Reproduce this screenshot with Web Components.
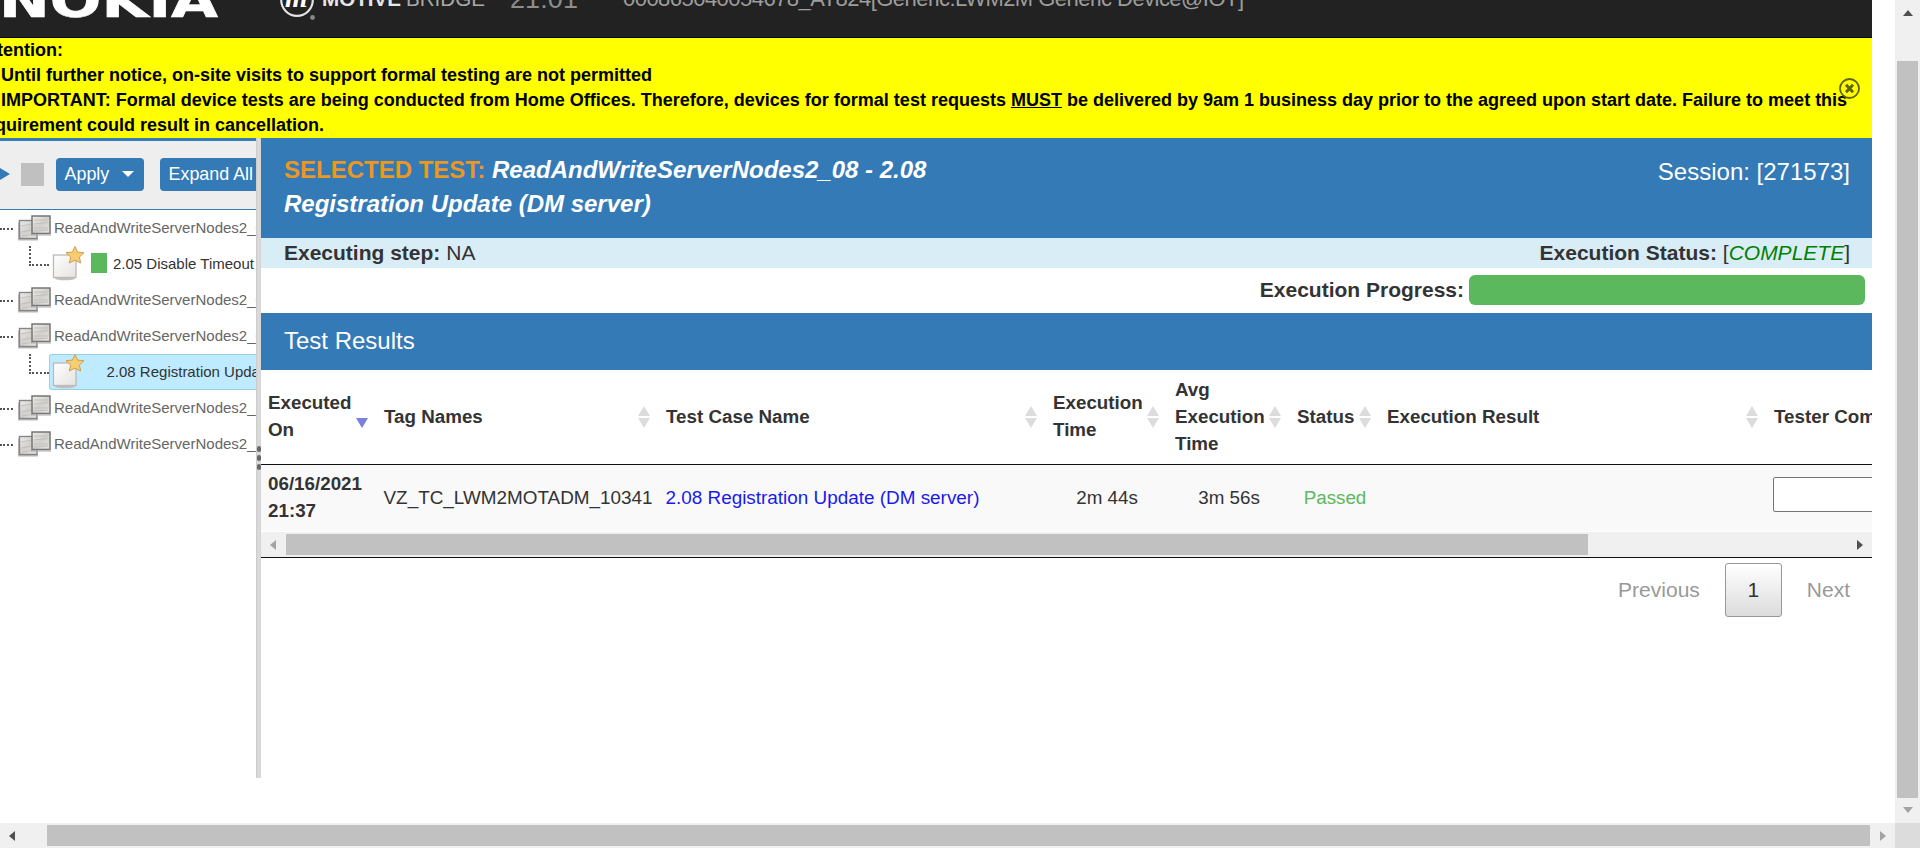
<!DOCTYPE html>
<html lang="en"><head><meta charset="utf-8"><title>Motive Bridge</title>
<style>html,body{margin:0;height:848px;overflow:hidden;background:#fff;font-family:"Liberation Sans",Arial,sans-serif;color:#333}</style></head>
<body><bridge-app></bridge-app>
<script>
function define(name, html){
  const t=document.createElement('template'); t.innerHTML=html;
  customElements.define(name, class extends HTMLElement{
    constructor(){super();this.attachShadow({mode:'open'}).append(t.content.cloneNode(true));}
  });
}

define('nav-header', `<style>
:host{display:block;height:37px;background:#222;border-bottom:1px solid #080808;overflow:hidden}
svg{display:block}
text{font-family:"Liberation Sans",Arial,sans-serif}
</style>
<svg width="1872" height="37">
<text x="-1" y="16.5" textLength="219" lengthAdjust="spacingAndGlyphs" fill="#fff" stroke="#fff" stroke-width=".6" style="font:bold 47px 'DejaVu Sans'">NOKIA</text>
<circle cx="297" cy="0" r="15.8" fill="none" stroke="#e4e4e4" stroke-width="2.2"/>
<text x="285" y="6.5" fill="#fff" style="font:italic bold 29px 'Liberation Serif'">m</text>
<circle cx="312.5" cy="17.5" r="2.4" fill="#888"/>
<text x="322" y="6" textLength="79" lengthAdjust="spacingAndGlyphs" fill="#e6e6e6" font-size="20" font-weight="bold">MOTIVE</text>
<text x="406" y="6" textLength="79" lengthAdjust="spacingAndGlyphs" fill="#aaa" font-size="20">BRIDGE</text>
<text x="510" y="8" textLength="68" fill="#8d8d8d" font-size="27">21:01</text>
<text x="623" y="6" textLength="621" fill="#9d9d9d" font-size="22">000865040054678_AT824[Generic:LWM2M Generic Device@IOT]</text>
</svg>`);

define('notice-banner', `<style>
:host{display:block;position:relative;height:100px;background:#ff0;overflow:hidden;color:#000;font-weight:bold;font-size:18px;line-height:25px;white-space:nowrap}
div{margin-left:-22px}
.in{padding-left:23px}
svg{position:absolute;left:1839px;top:40px}
</style>
<div>Attention:</div><div class="in">Until further notice, on-site visits to support formal testing are not permitted</div>
<div class="in">IMPORTANT: Formal device tests are being conducted from Home Offices. Therefore, devices for formal test requests <u>MUST</u> be delivered by 9am 1 business day prior to the agreed upon start date. Failure to meet this</div>
<div>requirement could result in cancellation.</div>
<svg width="21" height="21" fill="none" stroke="#626200"><circle cx="10.5" cy="10.5" r="9.5" stroke-width="1.8"/><path d="M7 6.8l7 7.4M14 6.8l-7 7.4" stroke-width="3"/></svg>`);

define('tool-bar', `<style>
:host{display:flex;align-items:center;box-sizing:border-box;height:72px;border-top:3px solid #337ab7;border-bottom:1px solid #337ab7;background:#eee;overflow:hidden;flex:none;padding-bottom:2px}
.play{flex:none;width:0;height:0;border:6px solid transparent;border-left:10px solid #337ab7;border-right:0;margin-right:11px}
.stop{flex:none;width:23px;height:23px;background:#c0c0c0;margin-right:12px}
button{flex:none;box-sizing:border-box;height:33px;border:0;border-radius:4px;background:#337ab7;color:#fff;font:17.9px/33px "Liberation Sans",Arial,sans-serif;padding:0 9px 0 8.5px;margin:0 16px 0 0;display:flex;align-items:center;white-space:nowrap}
button.a{width:88px}
i{border:6px solid transparent;border-top-color:#fff;border-bottom:0;margin-left:13px}
</style><span class="play"></span><span class="stop"></span><button class="a">Apply<i></i></button><button>Expand All</button>`);

define('folder-icon', `<style>:host{display:block;flex:none;width:36px;height:30px}svg{display:block}</style>
<svg width="36" height="30"><defs><linearGradient id="g" x2="1" y2="1"><stop stop-color="#efedeb"/><stop offset=".5" stop-color="#d2d0cd"/><stop offset="1" stop-color="#e6e4e1"/></linearGradient></defs>
<path d="M2 10.500v17h19" fill="none" stroke="#bbb" stroke-width="2"/>
<rect x="2.500" y="8.500" width="17.500" height="18" fill="url(#g)" stroke="#858585" stroke-width="1.4"/>
<path d="M4 14l11-2M4 20l12-2M5 24l12-2" stroke="#c2bfbc"/>
<rect x="15" y="4" width="18" height="17.500" fill="url(#g)" stroke="#767676" stroke-width="1.5"/>
<path d="M17 8h14M17 12l14-1.500M17 16h14M17 19l14-1" stroke="#c2bfbc"/><path d="M14 23h20" stroke="#aaa"/></svg>`);

define('page-icon', `<style>:host{display:block;flex:none;width:36px;height:36px}svg{display:block}</style>
<svg width="36" height="36"><defs><linearGradient id="p" x2="1" y2="1"><stop stop-color="#fff"/><stop offset="1" stop-color="#e5e3e1"/></linearGradient></defs>
<ellipse cx="15" cy="32.500" rx="10" ry="1.800" fill="#c0c0c0"/><rect x="3.500" y="9" width="22.500" height="22.500" fill="url(#p)" stroke="#bdb9b6" stroke-width="1.3"/>
<path d="M25 .5l2.600 5.600 6.400 .6-4.600 4.300 1.300 6-5.700-2.800-5.700 2.800 1.400-6-4.700-4.300 6.400-.6z" fill="#f8cd72" stroke="#cda14e"/></svg>`);

define('tree-group', `<style>
:host{display:flex;align-items:center;box-sizing:border-box;padding-bottom:2px;height:36px;flex:none;font-size:15px;color:#666;white-space:nowrap}
i{width:13px;border-top:2px dotted #555;flex:none;margin:3px 4px 0 0;height:0}
folder-icon{margin:-1px 1px 0 0}
</style><i></i><folder-icon></folder-icon><slot></slot>`);

define('tree-leaf', `<style>
:host{display:flex;height:36px;flex:none;font-size:15px;line-height:36px;color:#333;white-space:nowrap}
.l{box-sizing:border-box;width:20px;height:20px;margin-left:29px;border-left:2px dotted #555;border-bottom:2px dotted #555;flex:none}
.row{display:flex;align-items:center;box-sizing:border-box;height:36px;flex:1;border:1px solid transparent;border-right:0;min-width:0}
:host([selected]) .row{background:#beebff;border-color:#99cfe6;border-radius:3px 0 0 3px}
b{width:16px;height:20px;background:#5cb85c;margin:-2px 6px 0 5px;flex:none}
:host([selected]) b{visibility:hidden;width:9.500px}
</style><span class="l"></span><span class="row"><page-icon></page-icon><b></b><slot></slot></span>`);

define('side-panel', `<style>
:host{display:flex;flex-direction:column;width:256px;height:640px;overflow:hidden;flex:none}
span{color:#f0a33c}
</style><tool-bar></tool-bar>
<tree-group>ReadAndWriteServerNodes2_<span>05</span></tree-group><tree-leaf>2.05 Disable Timeout</tree-leaf>
<tree-group>ReadAndWriteServerNodes2_<span>06</span></tree-group><tree-group>ReadAndWriteServerNodes2_<span>08</span></tree-group>
<tree-leaf selected>2.08 Registration Update (DM server)</tree-leaf>
<tree-group>ReadAndWriteServerNodes2_</tree-group><tree-group>ReadAndWriteServerNodes2_</tree-group>`);

define('split-bar', `<style>
:host{display:flex;flex-direction:column;align-items:center;justify-content:center;gap:3px;width:5px;height:640px;background:linear-gradient(90deg,#cbcbcb,#dcdcdc 50%,#d4d4d4);flex:none}
i{width:4px;height:6px;border-radius:2px;background:#686868}
</style><i></i><i></i><i></i>`);

define('test-header', `<style>
:host{display:flex;justify-content:space-between;box-sizing:border-box;height:100px;background:#337ab7;color:#fff;padding:15px 22px 0 23px;font-size:24px;line-height:34px}
.t{width:660px;font-weight:bold}
.t span{color:#ec971f}
.s{padding-top:2px}
</style><div class="t"><span>SELECTED TEST:</span> <i>ReadAndWriteServerNodes2_08 - 2.08<br>Registration Update (DM server)</i></div><div class="s">Session: [271573]</div>`);

define('status-rows', `<style>
:host{display:block;font-size:21px}
.a{display:flex;justify-content:space-between;height:30px;line-height:30px;background:#d9edf7;padding:0 22px 0 23px}
.b{display:flex;justify-content:flex-end;align-items:center;height:45px;box-sizing:border-box;padding:0 7px 1px 0;gap:5px;font-weight:bold}
.p{width:396px;height:30px;border-radius:6px;background:#5cb85c}
em{color:#008000}
</style><div class="a"><span><b>Executing step:</b> NA</span><span><b>Execution Status:</b> [<em>COMPLETE</em>]</span></div>
<div class="b">Execution Progress:<span class="p"></span></div>`);

define('section-title', `<style>:host{display:block;box-sizing:border-box;height:57px;background:#337ab7;color:#fff;padding-left:23px;font-size:24px;line-height:55px}</style><slot></slot>`);

define('sort-icon', `<style>
:host{display:flex;flex-direction:column;gap:2px;flex:none;width:12px}
i{border:6px solid transparent}
.u{border-bottom:10px solid #dcdcdc;border-top:0}
.d{border-top:10px solid #dcdcdc;border-bottom:0}
:host([desc]) .u{visibility:hidden}
:host([desc]) .d{border-top-color:#7a80dd}
</style><i class="u"></i><i class="d"></i>`);

define('h-scroll', `<style>
:host{display:flex;align-items:center;height:25px;background:#f0f0f0;--thumb:#c1c1c1}
i{border:5.5px solid transparent;flex:none}
.l{border-right:6px solid var(--lc,#a3a3a3);border-left:0;margin-left:9px;margin-right:var(--ls,10px)}
.t{background:var(--thumb);height:21px;width:var(--tw)}
.r{border-left:6px solid var(--rc,#505050);border-right:0;margin-left:auto;margin-right:9px}
</style><i class="l"></i><span class="t"></span><i class="r"></i>`);

define('v-scroll', `<style>
:host{display:flex;flex-direction:column;align-items:center;width:25px;height:823px;background:#f0f0f0;flex:none}
i{border:5.5px solid transparent;flex:none}
.u{border-bottom:6px solid #505050;border-top:0;margin:10px 0 45px}
.t{background:#c1c1c1;width:21px;height:737px;flex:none}
.d{border-top:6px solid #a3a3a3;border-bottom:0;margin-top:9px}
</style><i class="u"></i><span class="t"></span><i class="d"></i>`);

define('head-cell', `<style>
:host{display:flex;box-sizing:border-box;height:94px;justify-content:space-between;align-items:center;padding:0 9px 0 7px}
span{margin-top:-2px}
</style><span><slot></slot></span><slot name="sort"></slot>`);

define('results-table', `<style>
:host{display:block;font-size:18.8px;line-height:27px;overflow:hidden}
.g{display:grid;grid-template-columns:116px 282px 387px 122px 122px 90px 387px 200px;align-items:center;white-space:nowrap}
.h{height:94px;font-weight:bold;border-bottom:1px solid #111}
.r{height:66px;background:#f9f9f9;border-bottom:1px solid #fff}
.r>*{padding:0 0 2px 7px}
.r .tag{padding-left:6.500px;font-size:18.900px}
.r .c{padding:0 0 2px;text-align:center}
.r a{color:#1a1aee;font-size:18.900px;padding-left:6.500px}
.r .ok{color:#5cb85c;text-align:center;padding:0 0 2px}
.r input{box-sizing:border-box;width:220px;height:35px;border:1px solid #767676;border-radius:2px;padding:0;margin:-7px 0 0 6px;background:#fff}
h-scroll{--tw:1302px;border-bottom:1px solid #111}
</style>
<div class="g h"><head-cell>Executed<br>On<sort-icon slot="sort" desc></sort-icon></head-cell><head-cell>Tag Names<sort-icon slot="sort"></sort-icon></head-cell><head-cell>Test Case Name<sort-icon slot="sort"></sort-icon></head-cell><head-cell>Execution<br>Time<sort-icon slot="sort"></sort-icon></head-cell><head-cell>Avg<br>Execution<br>Time<sort-icon slot="sort"></sort-icon></head-cell><head-cell>Status<sort-icon slot="sort"></sort-icon></head-cell><head-cell>Execution Result<sort-icon slot="sort"></sort-icon></head-cell><head-cell>Tester Comments</head-cell></div>
<div class="g r"><b>06/16/2021<br>21:37</b><span class="tag">VZ_TC_LWM2MOTADM_10341</span><a>2.08 Registration Update (DM server)</a><span class="c">2m 44s</span><span class="c">3m 56s</span><span class="ok">Passed</span><span></span><input></div>
<h-scroll></h-scroll>`);

define('page-nav', `<style>
:host{display:flex;justify-content:flex-end;align-items:center;padding:5px 22px 0 0;height:54px;font-size:21px;line-height:54px;color:#999}
b{box-sizing:border-box;width:57px;height:54px;border:1px solid #979797;border-radius:3px;background:linear-gradient(#fff,#dcdcdc);color:#333;font-weight:normal;text-align:center;line-height:52px;margin:0 25px 0 25px}
</style><span>Previous</span><b>1</b><span>Next</span>`);

define('bridge-app', `<style>
:host{display:grid;grid-template-columns:1895px 25px;grid-template-rows:823px 25px;width:1920px;height:848px}
.page{width:1872px;overflow:hidden}
.split{display:flex;height:640px}
.main{flex:1;min-width:0}
.x{--tw:1823px;--lc:#505050;--rc:#a3a3a3;--ls:32px}
.corner{background:#dcdcdc}
</style>
<div class="page"><nav-header></nav-header><notice-banner></notice-banner>
<div class="split"><side-panel></side-panel><split-bar></split-bar><div class="main"><test-header></test-header><status-rows></status-rows><section-title>Test Results</section-title><results-table></results-table><page-nav></page-nav></div></div></div>
<v-scroll></v-scroll><h-scroll class="x"></h-scroll><div class="corner"></div>`);
</script></body></html>
